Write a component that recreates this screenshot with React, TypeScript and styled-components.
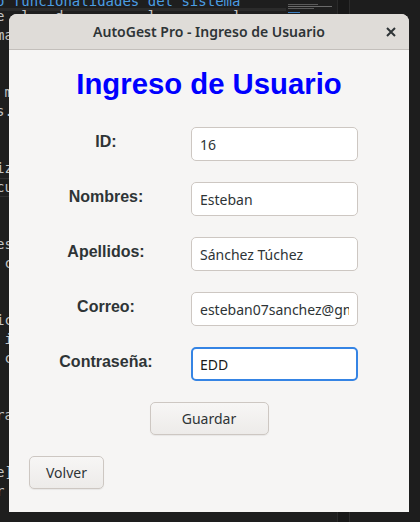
import styled, { createGlobalStyle } from 'styled-components';

const GlobalStyle = createGlobalStyle`
  html, body {
    margin: 0;
    padding: 0;
    background: #1e1e1e;
  }
  body {
    font-family: "Noto Sans", sans-serif;
  }
  * {
    box-sizing: border-box;
  }
`;

const codeLines = [
  'e  l   d          l         ]',
  'ma',
  '',
  '',
  ' m',
  's.',
  '',
  '',
  'iz',
  'cu',
  '',
  '',
  'es',
  ' c',
  '',
  '',
  'ic',
  ' i',
  ' c',
  '',
  '',
  'ra',
  '',
  '',
  'e]',
  'r',
  '',
];

const fields = [
  { label: 'ID:', value: '16' },
  { label: 'Nombres:', value: 'Esteban' },
  { label: 'Apellidos:', value: 'Sánchez Túchez' },
  { label: 'Correo:', value: 'esteban07sanchez@gmail.com' },
  { label: 'Contraseña:', value: 'EDD', focused: true },
];

const Desktop = styled.div`
  position: relative;
  width: 420px;
  height: 522px;
  overflow: hidden;
  display: flex;
  background: #1e1e1e;
`;

const CodePane = styled.div`
  flex: 0 0 286px;
  display: flex;
  flex-direction: column;
  overflow: hidden;
  font-family: "DejaVu Sans Mono", monospace;
  font-size: 14px;
`;

const HeadingStrip = styled.div`
  height: 8px;
  overflow: hidden;
  flex-shrink: 0;
`;

const HeadingText = styled.div`
  margin: -8px 0 0 -4px;
  line-height: 19px;
  white-space: pre;
  color: #4b9de2;
`;

const HeadingRule = styled.div`
  height: 3px;
  flex-shrink: 0;
  background: #2b2b2b;
`;

const Lines = styled.div`
  margin-top: -4px;
`;

const CodeLine = styled.div<{ $current?: boolean }>`
  height: 19px;
  line-height: 19px;
  margin-left: -4px;
  white-space: pre;
  color: #c4c4c4;
  box-shadow: ${p => (p.$current ? 'inset 0 1px #303030, inset 0 -1px #303030' : 'none')};
`;

const Minimap = styled.div`
  flex: 0 0 51px;
  background: #1e1e1e;
`;

const ScrollTrack = styled.div`
  flex: 0 0 13px;
  background: #181818;
  border-left: 1px solid #2a2a2a;
  border-right: 1px solid #2c2c2c;
`;

const SidePanel = styled.div`
  flex: 1;
  background: #1d1d1d;
`;

const Window = styled.div`
  position: absolute;
  left: 9px;
  top: 14px;
  width: 400px;
  height: 498px;
  border-radius: 8px 8px 0 0;
  overflow: hidden;
  background: #f6f5f4;
  display: flex;
  flex-direction: column;
`;

const TitleBar = styled.div`
  height: 36px;
  flex-shrink: 0;
  display: grid;
  grid-template-columns: 1fr auto 1fr;
  align-items: center;
  background: #dfdcd8;
  border-bottom: 1px solid #c3bfbb;
`;

const Title = styled.div`
  grid-column: 2;
  font-family: "Noto Sans", sans-serif;
  font-size: 14px;
  font-weight: 600;
  color: #2e3436;
  white-space: nowrap;
`;

const CloseButton = styled.div`
  grid-column: 3;
  justify-self: end;
  display: flex;
  margin-right: 10px;
  color: #2e3436;
`;

const Body = styled.div`
  flex: 1;
  display: flex;
  flex-direction: column;
`;

const Heading = styled.h1`
  margin: 17px 0 0;
  text-align: center;
  font-family: "Liberation Sans", Arial, sans-serif;
  font-size: 29.3px;
  font-weight: 700;
  line-height: 33px;
  color: #0000ff;
`;

const Form = styled.div`
  margin-top: 27px;
  padding-left: 22px;
  display: grid;
  grid-template-columns: 150px 167px;
  column-gap: 10px;
  row-gap: 21px;
`;

const Label = styled.label`
  display: flex;
  align-items: center;
  justify-content: center;
  padding-bottom: 5px;
  font-family: "Liberation Sans", Arial, sans-serif;
  font-size: 16px;
  font-weight: 700;
  color: #2e3436;
  white-space: nowrap;
`;

const Field = styled.input<{ $focused?: boolean }>`
  width: 167px;
  height: 34px;
  margin: 0;
  padding: 0 ${p => (p.$focused ? '7px' : '8px')};
  border: ${p => (p.$focused ? '2px solid #3584e4' : '1px solid #cdc7c2')};
  border-radius: 5px;
  background: #ffffff;
  font-family: "Noto Sans", sans-serif;
  font-size: 14px;
  color: ${p => (p.$focused ? '#1a1a1a' : '#2e3436')};
  outline: none;
`;

const Button = styled.button<{ $wide?: boolean }>`
  width: ${p => (p.$wide ? '119px' : '75px')};
  height: 33px;
  padding: 0;
  border: 1px solid #cdc7c2;
  border-radius: 5px;
  background: linear-gradient(to bottom, #f7f6f5, #edebe9);
  box-shadow: 0 1px 1px rgba(0, 0, 0, 0.06);
  font-family: "Noto Sans", sans-serif;
  font-size: 14px;
  color: #2e3436;
`;

const SaveRow = styled.div`
  margin-top: 21px;
  display: flex;
  justify-content: center;
`;

const BackRow = styled.div`
  margin-top: 21px;
  padding-left: 20px;
  display: flex;
`;

const CloseIcon = () => (
  <svg width="16" height="16" viewBox="0 0 16 16">
    <path d="M4 4 L12 12 M12 4 L4 12" stroke="currentColor" strokeWidth="2" fill="none" />
  </svg>
);

const MinimapTop = () => (
  <svg width="51" height="14" viewBox="0 0 51 14">
    <rect x="2" y="1" width="30" height="1" fill="#5a5a5a" />
    <rect x="2" y="3" width="44" height="1" fill="#6a6a6a" />
    <rect x="2" y="5" width="26" height="1" fill="#5a5a5a" />
    <rect x="2" y="9" width="12" height="1" fill="#3d7fc0" />
    <rect x="2" y="11" width="40" height="1" fill="#5e5e5e" />
    <rect x="2" y="13" width="34" height="1" fill="#555555" />
  </svg>
);

export default function App() {
  return (
    <>
      <GlobalStyle />
      <Desktop>
        <CodePane>
          <HeadingStrip>
            <HeadingText>o funcionalidades del sistema</HeadingText>
          </HeadingStrip>
          <HeadingRule />
          <Lines>
            {codeLines.map((line, i) => (
              <CodeLine key={i} $current={i === 9}>
                {line}
              </CodeLine>
            ))}
          </Lines>
        </CodePane>
        <Minimap>
          <MinimapTop />
        </Minimap>
        <ScrollTrack />
        <SidePanel />

        <Window>
          <TitleBar>
            <Title>AutoGest Pro - Ingreso de Usuario</Title>
            <CloseButton>
              <CloseIcon />
            </CloseButton>
          </TitleBar>
          <Body>
            <Heading>Ingreso de Usuario</Heading>
            <Form>
              {fields.map(f => (
                <>
                  <Label key={f.label + '-l'}>{f.label}</Label>
                  <Field key={f.label + '-f'} defaultValue={f.value} readOnly $focused={f.focused} />
                </>
              ))}
            </Form>
            <SaveRow>
              <Button $wide>Guardar</Button>
            </SaveRow>
            <BackRow>
              <Button>Volver</Button>
            </BackRow>
          </Body>
        </Window>
      </Desktop>
    </>
  );
}
